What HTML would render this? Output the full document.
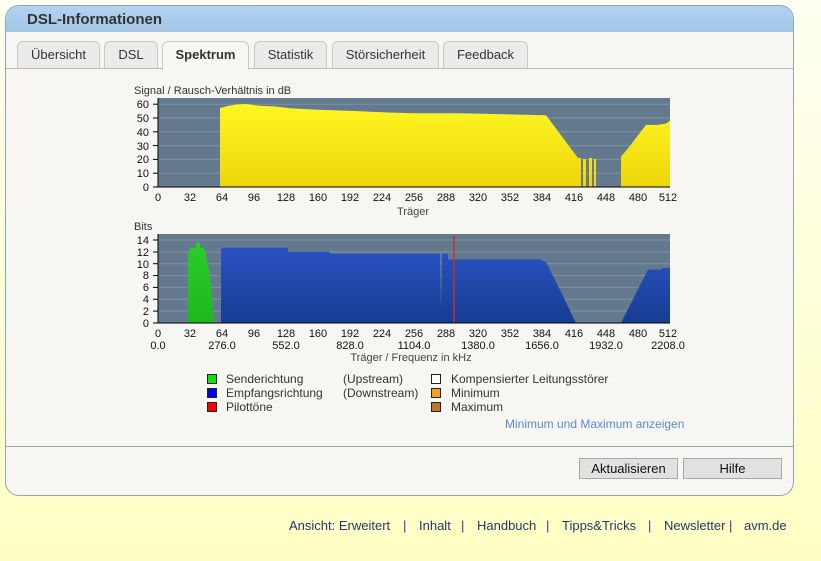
<!DOCTYPE html>
<html><head><meta charset="utf-8"><style>
body{margin:0;width:821px;height:561px;overflow:hidden;background:linear-gradient(#fffff2,#ffffc4);font-family:"Liberation Sans",sans-serif;position:relative}
.panel{position:absolute;left:5px;top:5px;width:787px;height:489px;background:#f7f6f2;border:1px solid #8fa7ab;border-radius:14px;overflow:hidden}
.hdr{height:26px;background:linear-gradient(#b2d4f2,#a3c6e6);font-weight:bold;font-size:15px;color:#333;line-height:28px;padding-left:21px}
.tabs{position:absolute;top:35px;left:0;width:100%;height:27px;border-bottom:1px solid #b8bcb8}
.tab{position:absolute;top:0;height:26px;background:#ebebea;border:1px solid #c8c8c4;border-bottom:none;border-radius:6px 6px 0 0;font-size:13px;color:#333;text-align:center;line-height:26px}
.tab.act{background:#f7f6f2;height:28px;font-weight:bold}
.t{position:absolute;font-size:12px;color:#333;white-space:nowrap}
.sq{position:absolute;width:8px;height:8px;border:1px solid #222}
.btn{position:absolute;top:458px;height:19px;background:#e1e1e1;border:1px solid #a8a8a8;font-size:13px;text-align:center;line-height:20px;color:#111}
.f{position:absolute;top:518px;font-size:13px;color:#1e3a6a;white-space:nowrap}
.p{position:absolute;top:518px;font-size:13px;color:#552a8a}
</style></head><body>
<div class="panel">
<div class="hdr">DSL-Informationen</div>
<div class="tabs">
<div class="tab" style="left:11px;width:81px">Übersicht</div>
<div class="tab" style="left:98px;width:52px">DSL</div>
<div class="tab act" style="left:156px;width:85px">Spektrum</div>
<div class="tab" style="left:248px;width:71px">Statistik</div>
<div class="tab" style="left:326px;width:105px">Störsicherheit</div>
<div class="tab" style="left:437px;width:83px">Feedback</div>
</div>
<div style="position:absolute;left:0;top:440px;width:100%;border-top:1px solid #8fa7ab"></div>
</div>
<svg width="821" height="561" style="position:absolute;left:0;top:0" font-family="Liberation Sans,sans-serif" font-size="11" fill="#111">
<defs>
<linearGradient id="yg" x1="0" y1="0" x2="0" y2="1"><stop offset="0" stop-color="#fff624"/><stop offset="1" stop-color="#eed60a"/></linearGradient>
<linearGradient id="bg" x1="0" y1="0" x2="0" y2="1"><stop offset="0" stop-color="#2a52c2"/><stop offset="1" stop-color="#173d92"/></linearGradient>
<linearGradient id="gg" x1="0" y1="0" x2="0" y2="1"><stop offset="0" stop-color="#2ccc2c"/><stop offset="1" stop-color="#1cb81c"/></linearGradient>
</defs>
<text x="134" y="94" fill="#333">Signal / Rausch-Verhältnis in dB</text>
<rect x="158" y="98" width="512" height="89" fill="#637a8e"/>
<g stroke="#8092a2" stroke-width="1">
<line x1="158" x2="670" y1="104.2" y2="104.2"/><line x1="158" x2="670" y1="118" y2="118"/><line x1="158" x2="670" y1="131.8" y2="131.8"/><line x1="158" x2="670" y1="145.6" y2="145.6"/><line x1="158" x2="670" y1="159.4" y2="159.4"/><line x1="158" x2="670" y1="173.2" y2="173.2"/>
</g>
<path fill="url(#yg)" d="M220,187 L220,108 L228,106 L236,104.5 L246,104 L258,105.6 L275,106.5 L290,108.3 L318,109.7 L358,111.1 L388,112.5 L414,113.2 L460,113.2 L488,113.9 L518,114.6 L546,115.2 L578,158 L581,158 L581,187 L583,187 L583,159 L586,159 L586,187 L589,187 L589,158 L592,158 L592,187 L594,187 L594,159 L596,159 L596,187 Z M621,187 L621,156.6 L628,148.4 L646,124.9 L658,124.9 L666,123.5 L670,120.8 L670,187 Z"/>
<line x1="158" y1="98" x2="158" y2="187" stroke="#000"/><line x1="158" y1="187" x2="670" y2="187" stroke="#000"/>
<g text-anchor="end"><text x="149" y="108">60</text><text x="149" y="122">50</text><text x="149" y="136">40</text><text x="149" y="150">30</text><text x="149" y="163">20</text><text x="149" y="177">10</text><text x="149" y="191">0</text></g>
<g stroke="#000"><line x1="153" x2="158" y1="104.2" y2="104.2"/><line x1="153" x2="158" y1="118" y2="118"/><line x1="153" x2="158" y1="131.8" y2="131.8"/><line x1="153" x2="158" y1="145.6" y2="145.6"/><line x1="153" x2="158" y1="159.4" y2="159.4"/><line x1="153" x2="158" y1="173.2" y2="173.2"/><line x1="153" x2="158" y1="187" y2="187"/></g>
<g text-anchor="middle"><text x="158" y="201">0</text><text x="190" y="201">32</text><text x="222" y="201">64</text><text x="254" y="201">96</text><text x="286" y="201">128</text><text x="318" y="201">160</text><text x="350" y="201">192</text><text x="382" y="201">224</text><text x="414" y="201">256</text><text x="446" y="201">288</text><text x="478" y="201">320</text><text x="510" y="201">352</text><text x="542" y="201">384</text><text x="574" y="201">416</text><text x="606" y="201">448</text><text x="638" y="201">480</text><text x="668" y="201">512</text>
<text x="413" y="215" fill="#444">Träger</text></g>

<text x="134" y="230" fill="#333">Bits</text>
<rect x="158" y="234" width="512" height="89" fill="#637a8e"/>
<g stroke="#8092a2"><line x1="158" x2="670" y1="240" y2="240"/><line x1="158" x2="670" y1="252" y2="252"/><line x1="158" x2="670" y1="263.7" y2="263.7"/><line x1="158" x2="670" y1="275.6" y2="275.6"/><line x1="158" x2="670" y1="287.4" y2="287.4"/><line x1="158" x2="670" y1="299.3" y2="299.3"/><line x1="158" x2="670" y1="311.1" y2="311.1"/></g>
<path fill="url(#gg)" d="M188,323 L188,254.8 L190,247.7 L196,247.7 L196,242.4 L200,242.4 L200,247.7 L204,247.7 L206,254.8 L210,275 L214,323 Z"/>
<path fill="url(#bg)" d="M221,323 L221,250 L222,247.7 L288,247.7 L288,251.8 L330,251.8 L330,253.6 L440,253.6 L441,310 L442,253.6 L448,253.6 L448,259.5 L540,259.5 L546,262 L560,290 L576,323 Z M621,323 L648,269.6 L662,269.6 L662,268 L670,268 L670,323 Z"/>
<line x1="454" y1="236" x2="454" y2="323" stroke="#c83030" stroke-width="1.5"/>
<line x1="158" y1="234" x2="158" y2="323" stroke="#000"/><line x1="158" y1="323" x2="670" y2="323" stroke="#000"/>
<g text-anchor="end"><text x="149" y="244">14</text><text x="149" y="256">12</text><text x="149" y="268">10</text><text x="149" y="279">8</text><text x="149" y="291">6</text><text x="149" y="303">4</text><text x="149" y="315">2</text><text x="149" y="327">0</text></g>
<g stroke="#000"><line x1="153" x2="158" y1="240" y2="240"/><line x1="153" x2="158" y1="252" y2="252"/><line x1="153" x2="158" y1="263.7" y2="263.7"/><line x1="153" x2="158" y1="275.6" y2="275.6"/><line x1="153" x2="158" y1="287.4" y2="287.4"/><line x1="153" x2="158" y1="299.3" y2="299.3"/><line x1="153" x2="158" y1="311.1" y2="311.1"/><line x1="153" x2="158" y1="323" y2="323"/></g>
<g text-anchor="middle"><text x="158" y="337">0</text><text x="190" y="337">32</text><text x="222" y="337">64</text><text x="254" y="337">96</text><text x="286" y="337">128</text><text x="318" y="337">160</text><text x="350" y="337">192</text><text x="382" y="337">224</text><text x="414" y="337">256</text><text x="446" y="337">288</text><text x="478" y="337">320</text><text x="510" y="337">352</text><text x="542" y="337">384</text><text x="574" y="337">416</text><text x="606" y="337">448</text><text x="638" y="337">480</text><text x="668" y="337">512</text>
<text x="158" y="349">0.0</text><text x="222" y="349">276.0</text><text x="286" y="349">552.0</text><text x="350" y="349">828.0</text><text x="414" y="349">1104.0</text><text x="478" y="349">1380.0</text><text x="542" y="349">1656.0</text><text x="606" y="349">1932.0</text><text x="668" y="349">2208.0</text>
<text x="411" y="361" fill="#444">Träger / Frequenz in kHz</text></g>
</svg>
<div class="sq" style="left:207px;top:374px;background:#10e010"></div>
<div class="sq" style="left:207px;top:388px;background:#0000f0"></div>
<div class="sq" style="left:207px;top:402px;background:#f00"></div>
<div class="sq" style="left:431px;top:374px;background:#fff"></div>
<div class="sq" style="left:431px;top:388px;background:#f7a010"></div>
<div class="sq" style="left:431px;top:402px;background:#c07820"></div>
<div class="t" style="left:226px;top:372px">Senderichtung</div>
<div class="t" style="left:226px;top:386px">Empfangsrichtung</div>
<div class="t" style="left:226px;top:400px">Pilottöne</div>
<div class="t" style="left:343px;top:372px">(Upstream)</div>
<div class="t" style="left:343px;top:386px">(Downstream)</div>
<div class="t" style="left:451px;top:372px">Kompensierter Leitungsstörer</div>
<div class="t" style="left:451px;top:386px">Minimum</div>
<div class="t" style="left:451px;top:400px">Maximum</div>
<div class="t" style="left:505px;top:417px;color:#5a8ad0">Minimum und Maximum anzeigen</div>
<div class="btn" style="left:579px;width:97px">Aktualisieren</div>
<div class="btn" style="left:683px;width:97px">Hilfe</div>
<div class="f" style="left:289px">Ansicht: Erweitert</div>
<div class="p" style="left:403px">|</div>
<div class="f" style="left:419px">Inhalt</div>
<div class="p" style="left:461px">|</div>
<div class="f" style="left:477px">Handbuch</div>
<div class="p" style="left:546px">|</div>
<div class="f" style="left:562px">Tipps&amp;Tricks</div>
<div class="p" style="left:648px">|</div>
<div class="f" style="left:664px">Newsletter</div>
<div class="p" style="left:729px">|</div>
<div class="f" style="left:744px">avm.de</div>
</body></html>
